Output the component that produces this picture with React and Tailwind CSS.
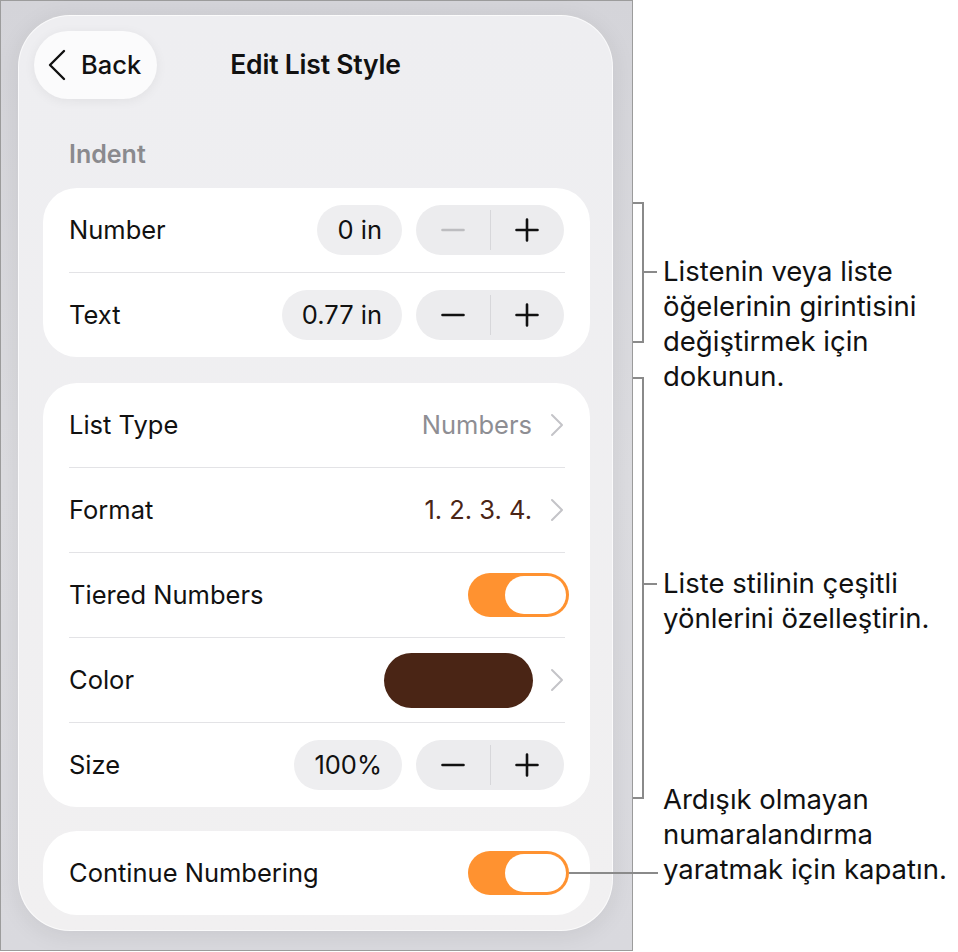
import React from "react";

const font = "font-['Inter','Noto_Sans',sans-serif]";

const Chevron = () => (
  <svg width="14" height="24" viewBox="0 0 14 24" fill="none" className="text-[#c4c4c8]">
    <path d="M2 2l10 10L2 22" stroke="currentColor" strokeWidth="2" strokeLinecap="round" strokeLinejoin="round" />
  </svg>
);

const Stepper = ({ minusDisabled = false }) => (
  <div className="flex h-[50px] w-[148px] items-center rounded-full bg-[#ececee]">
    <div className="flex flex-1 items-center justify-center">
      <svg width="24" height="24" viewBox="0 0 24 24">
        <path d="M1.5 12h21" stroke={minusDisabled ? "#bdbdc0" : "#111"} strokeWidth="2.6" strokeLinecap="round" />
      </svg>
    </div>
    <div className="h-[40px] w-px bg-[#d7d7da]" />
    <div className="flex flex-1 items-center justify-center">
      <svg width="24" height="24" viewBox="0 0 24 24">
        <path d="M1.5 12h21M12 1.5v21" stroke="#111" strokeWidth="2.6" strokeLinecap="round" />
      </svg>
    </div>
  </div>
);

const ValuePill = ({ children }) => (
  <div className="mr-[14px] flex h-[50px] items-center rounded-full bg-[#eeeef0] px-[20px]">
    {children}
  </div>
);

const Toggle = ({ callout = false }) => (
  <div className="relative -mr-[5px] flex h-[44px] w-[101px] items-center justify-end rounded-full bg-[#ff9230] p-[3px]">
    <div className="h-[38px] w-[61px] rounded-full bg-white" />
    {callout && (
      <div className="absolute left-full top-1/2 h-[2px] w-[89px] -translate-y-1/2 bg-[#8a8a8a]" />
    )}
  </div>
);

const Row = ({ label, children, last = false }) => (
  <>
    <div className="flex h-[84px] items-center justify-between px-[26px]">
      <span>{label}</span>
      <div className="flex items-center">{children}</div>
    </div>
    {!last && <div className="ml-[26px] mr-[25px] h-px bg-[#e3e3e6]" />}
  </>
);

const Group = ({ className = "", children }) => (
  <div className={`ml-[24px] mr-[22px] rounded-[34px] bg-white ${className}`}>{children}</div>
);

const Panel = () => (
  <div className="h-[951px] w-[633px] shrink-0 border border-[#9c9c9c] bg-gradient-to-b from-[#d4d4d9] via-[#dcdce0] to-[#d9d9de] pl-[17px] pt-[14px]">
    <div className="flex h-[916px] w-[595px] flex-col rounded-[52px] border border-white/70 bg-gradient-to-b from-[#eeeef1] to-[#f1f0f1] pt-[15px] text-[25.5px] text-[#111] shadow-[0_4px_24px_rgba(0,0,0,0.08)]">
      <div className="grid h-[68px] grid-cols-[1fr_auto_1fr] items-center px-[15px]">
        <div className="flex h-[68px] w-[123px] items-center gap-[15px] rounded-full bg-[#fbfbfc] pl-[14px] shadow-[0_2px_12px_rgba(0,0,0,0.06)]">
          <svg width="18" height="32" viewBox="0 0 18 32" fill="none">
            <path d="M16 2L2 16l14 14" stroke="#111" strokeWidth="2.4" strokeLinecap="round" strokeLinejoin="round" />
          </svg>
          <span className="font-medium">Back</span>
        </div>
        <h1 className="text-[26.5px] font-semibold tracking-[-0.2px]">Edit List Style</h1>
        <div />
      </div>

      <div className="mt-[41px] h-[28px] pl-[50px] text-[25px] font-semibold leading-[28px] text-[#8a8a8e]">
        Indent
      </div>

      <Group className="mt-[20px]">
        <Row label="Number">
          <ValuePill>0 in</ValuePill>
          <Stepper minusDisabled />
        </Row>
        <Row label="Text" last>
          <ValuePill>0.77 in</ValuePill>
          <Stepper />
        </Row>
      </Group>

      <Group className="mt-[26px]">
        <Row label="List Type">
          <span className="mr-[18px] text-[#8e8e93]">Numbers</span>
          <Chevron />
        </Row>
        <Row label="Format">
          <span className="mr-[18px] text-[#4a2516]">1. 2. 3. 4.</span>
          <Chevron />
        </Row>
        <Row label="Tiered Numbers">
          <Toggle />
        </Row>
        <Row label="Color">
          <div className="mr-[17px] h-[55px] w-[149px] rounded-full bg-[#4a2515]" />
          <Chevron />
        </Row>
        <Row label="Size" last>
          <ValuePill>100%</ValuePill>
          <Stepper />
        </Row>
      </Group>

      <Group className="mt-[24px]">
        <Row label="Continue Numbering" last>
          <Toggle callout />
        </Row>
      </Group>
    </div>
  </div>
);

const Bracket = ({ height }) => (
  <div
    className={`w-[11px] shrink-0 border-y-2 border-r-2 border-[#8a8a8a] ${height}`}
  />
);

const Annotations = () => (
  <div className="flex flex-col pt-[202px] text-[27.5px] leading-[35px] text-[#111]">
    <div className="flex h-[141px] items-start">
      <Bracket height="h-[141px]" />
      <div className="mt-[69px] h-[2px] w-[13px] bg-[#8a8a8a]" />
      <p className="ml-[6px] mt-[52px] whitespace-nowrap">
        Listenin veya liste
        <br />
        öğelerinin girintisini
        <br />
        değiştirmek için
        <br />
        dokunun.
      </p>
    </div>

    <div className="mt-[34px] flex h-[422px] items-start">
      <Bracket height="h-[422px]" />
      <div className="mt-[206px] h-[2px] w-[13px] bg-[#8a8a8a]" />
      <p className="ml-[6px] mt-[189px] whitespace-nowrap">
        Liste stilinin çeşitli
        <br />
        yönlerini özelleştirin.
      </p>
    </div>

    <p className="-mt-[17px] whitespace-nowrap pl-[30px]">
      Ardışık olmayan
      <br />
      numaralandırma
      <br />
      yaratmak için kapatın.
    </p>
  </div>
);

export default function App() {
  return (
    <div className={`flex h-[952px] w-[958px] items-start bg-white ${font}`}>
      <Panel />
      <Annotations />
    </div>
  );
}
